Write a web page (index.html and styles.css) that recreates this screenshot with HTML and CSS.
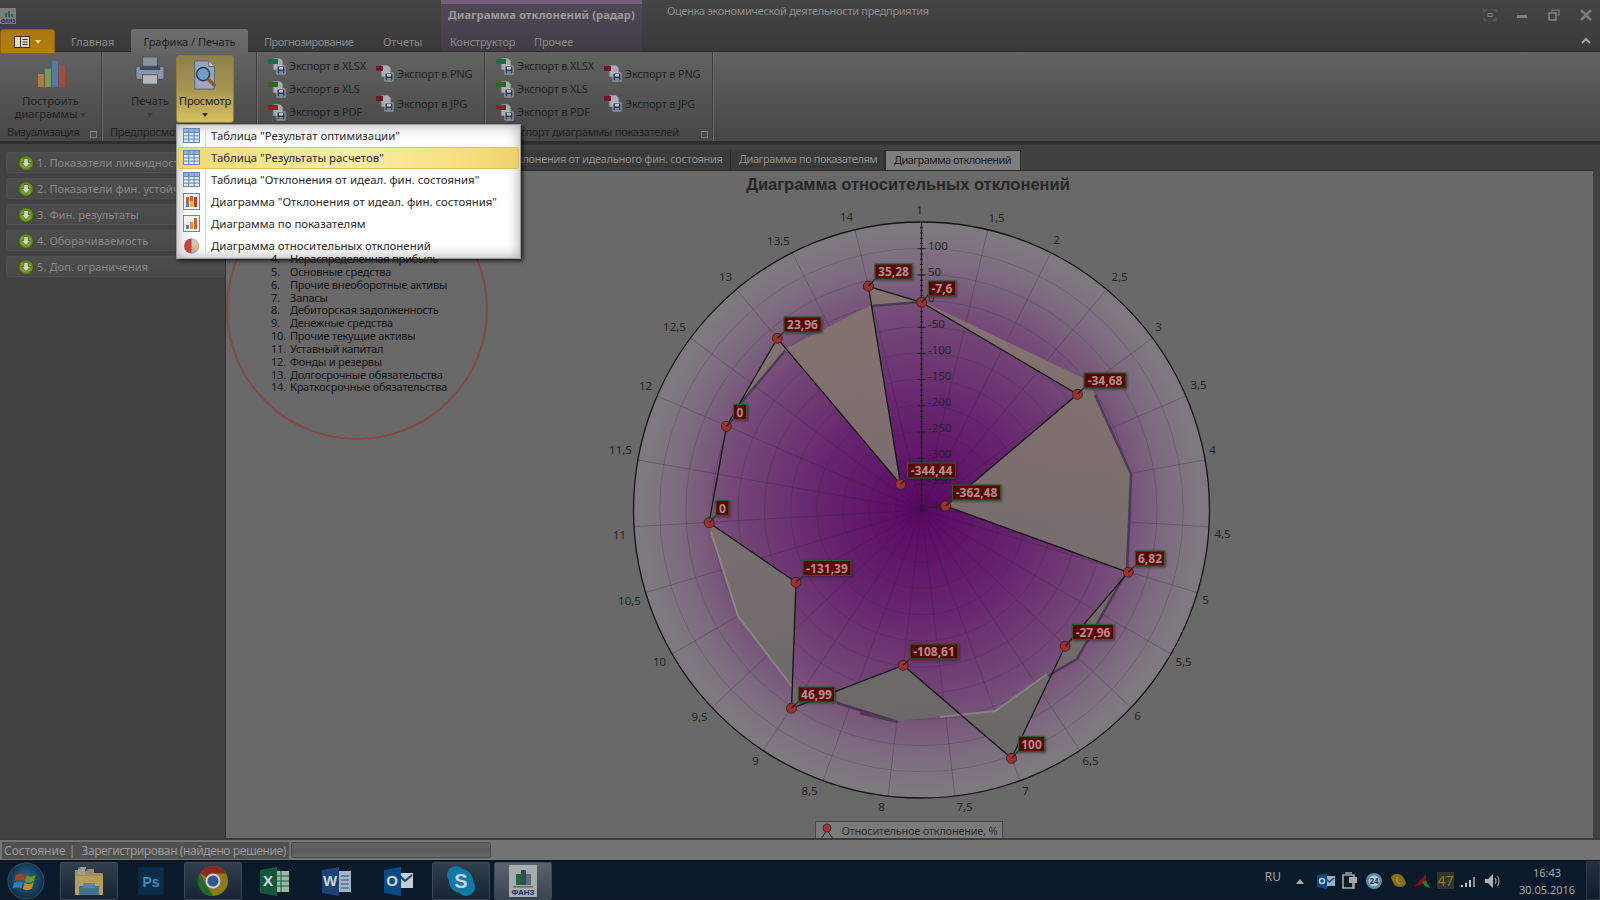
FILE: index.html
```html
<!DOCTYPE html>
<html lang="ru">
<head>
<meta charset="utf-8">
<title>Оценка экономической деятельности предприятия</title>
<link rel="stylesheet" href="styles.css">
</head>
<body>
<svg class="defs" width="0" height="0" aria-hidden="true">
  <defs>
    <symbol id="doc" viewBox="0 0 18 18">
      <path d="M5 1h7l3 3v9H5z" fill="#a9adb3" stroke="#5c6068" stroke-width=".8"/>
      <rect x="9" y="9" width="8" height="8" fill="#2c3b52" stroke="#c0c4c9" stroke-width=".8"/>
      <rect x="11" y="10" width="4" height="2.5" fill="#c0c4c9"/>
      <rect x="11" y="14" width="4" height="3" fill="#7b8796"/>
    </symbol>
    <symbol id="tbl" viewBox="0 0 18 18">
      <rect x=".5" y="1.5" width="16" height="14" fill="#dfe9f6" stroke="#5e88bb"/>
      <rect x="1" y="2" width="15" height="3.4" fill="#8db2dd"/>
      <path d="M.5 5.5h16M.5 8.8h16M.5 12.1h16M5.8 2v13M11.1 2v13" stroke="#5e88bb" fill="none"/>
    </symbol>
    <symbol id="arrow" viewBox="0 0 16 16">
      <circle cx="8" cy="8" r="7.5" fill="#5f7f26" stroke="#3d5418"/>
      <circle cx="8" cy="8" r="5.6" fill="#7fa432"/>
      <path d="M5.8 3.5h4.4v4h2.5L8 12.6 3.300 7.500h2.500z" fill="#cfd8bb" stroke="#3d5418" stroke-width=".7"/>
    </symbol>
  </defs>
</svg>

<header class="head">
  <div class="ctx-tint"></div>
  <div class="title-row">
    <svg class="app-logo" viewBox="0 0 16 16"><rect width="16" height="16" fill="#7c7c7c"/><path d="M5 9h2V5H5zM8 9h2V3H8zM11 9h2V6h-2z" fill="#2f5f3f"/><text x="8" y="15" class="logo-text">ФАНЗ</text></svg>
    <span class="ctx-title">Диаграмма отклонений (радар)</span>
    <span class="app-title">Оценка экономической деятельности предприятия</span>
    <div class="win-btns">
      <svg viewBox="0 0 14 12"><path d="M1 3V1h3M10 1h3v2M13 9v2h-3M4 11H1V9" fill="none" stroke="#5c5c5c" stroke-width="1.4"/><rect x="5" y="4.500" width="4" height="3" fill="none" stroke="#808080"/></svg>
      <svg viewBox="0 0 14 12"><rect x="2" y="6" width="10" height="3" fill="#808080"/></svg>
      <svg viewBox="0 0 14 12"><path d="M5 3V1h7v5h-2" fill="none" stroke="#808080" stroke-width="1.200"/><rect x="2" y="4" width="7" height="7" fill="none" stroke="#808080" stroke-width="1.600"/></svg>
      <svg viewBox="0 0 14 12"><path d="M2 1l10 10M12 1L2 11" stroke="#7c7c7c" stroke-width="2.600"/></svg>
    </div>
  </div>
  <nav class="tab-row">
    <div class="app-btn">
      <svg viewBox="0 0 16 12" class="app-btn-ico"><rect x=".5" y=".5" width="15" height="11" fill="#ddd8c8" stroke="#3f3420"/><path d="M6.500 1v10" stroke="#3f3420"/><path d="M8.500 3.500h5M8.500 6h5M8.500 8.500h5" stroke="#3f3420"/></svg>
      <span class="caret caret-light"></span>
    </div>
    <span class="rtab">Главная</span>
    <span class="rtab rtab-active">Графика / Печать</span>
    <span class="rtab rtab-long">Прогнозирование</span>
    <span class="rtab rtab-rep">Отчеты</span>
    <span class="rtab rtab-ctx">Конструктор</span>
    <span class="rtab rtab-ctx">Прочее</span>
    <svg class="collapse" viewBox="0 0 10 8"><path d="M1 6l4-4 4 4" fill="none" stroke="#a8a8a8" stroke-width="2"/></svg>
  </nav>
</header>

<section class="ribbon">
  <div class="group g1">
    <div class="group-body">
      <div class="big-btn">
        <svg class="big-ico" viewBox="0 0 30 30"><rect x="2" y="15" width="6" height="13" fill="#b07a3a"/><rect x="9" y="10" width="6" height="18" fill="#7a9a52"/><rect x="16" y="2" width="6" height="26" fill="#5578a6"/><rect x="23" y="7" width="6" height="21" fill="#a84a40"/></svg>
        <span class="big-label">Построить<br>диаграммы <i class="caret"></i></span>
      </div>
    </div>
    <div class="group-label">Визуализация<i class="launcher"></i></div>
  </div>
  <div class="group g2">
    <div class="group-body">
      <div class="big-btn print-btn">
        <svg class="big-ico" viewBox="0 0 32 32"><rect x="8" y="1" width="16" height="11" fill="#8d929a" stroke="#484c54"/><rect x="1" y="11" width="30" height="14" rx="2" fill="#8b96a8" stroke="#444a56"/><rect x="5" y="11" width="22" height="4" fill="#3f4b60"/><rect x="8" y="20" width="16" height="10" fill="#b5b8bd" stroke="#50545c"/></svg>
        <span class="big-label">Печать<br><i class="caret"></i></span>
      </div>
      <div class="big-btn view-btn">
        <svg class="big-ico" viewBox="0 0 30 32"><path d="M4 1h15l6 6v24H4z" fill="#9aa6bb" stroke="#55607a"/><path d="M19 1v6h6" fill="#c7ccd6" stroke="#55607a"/><circle cx="13" cy="15" r="7" fill="#6f9cc8" stroke="#2a3a55" stroke-width="1.600"/><path d="M18 20l8 8" stroke="#8a5a2a" stroke-width="3.400"/></svg>
        <span class="big-label">Просмотр<br><i class="caret caret-dark"></i></span>
      </div>
    </div>
    <div class="group-label">Предпросмотр</div>
  </div>
  <div class="group g3">
    <div class="group-body exports">
      <div class="ex-col">
        <div class="ex"><svg class="ex-ico"><use href="#doc"/><rect y="2" width="10" height="5" fill="#1f6a4a"/></svg>Экспорт в XLSX</div>
        <div class="ex"><svg class="ex-ico"><use href="#doc"/><rect y="2" width="10" height="5" fill="#2e6a1e"/></svg>Экспорт в XLS</div>
        <div class="ex"><svg class="ex-ico"><use href="#doc"/><rect y="2" width="10" height="5" fill="#8e2222"/></svg>Экспорт в PDF</div>
      </div>
      <div class="ex-col ex-col-2">
        <div class="ex"><svg class="ex-ico"><use href="#doc"/><rect y="2" width="7" height="5" fill="#6e1a24"/></svg>Экспорт в PNG</div>
        <div class="ex"><svg class="ex-ico"><use href="#doc"/><rect y="2" width="7" height="5" fill="#6e1a24"/></svg>Экспорт в JPG</div>
      </div>
    </div>
    <div class="group-label">Экспорт таблиц показателей</div>
  </div>
  <div class="group g4">
    <div class="group-body exports">
      <div class="ex-col">
        <div class="ex"><svg class="ex-ico"><use href="#doc"/><rect y="2" width="10" height="5" fill="#1f6a4a"/></svg>Экспорт в XLSX</div>
        <div class="ex"><svg class="ex-ico"><use href="#doc"/><rect y="2" width="10" height="5" fill="#2e6a1e"/></svg>Экспорт в XLS</div>
        <div class="ex"><svg class="ex-ico"><use href="#doc"/><rect y="2" width="10" height="5" fill="#8e2222"/></svg>Экспорт в PDF</div>
      </div>
      <div class="ex-col ex-col-2">
        <div class="ex"><svg class="ex-ico"><use href="#doc"/><rect y="2" width="7" height="5" fill="#6e1a24"/></svg>Экспорт в PNG</div>
        <div class="ex"><svg class="ex-ico"><use href="#doc"/><rect y="2" width="7" height="5" fill="#6e1a24"/></svg>Экспорт в JPG</div>
      </div>
    </div>
    <div class="group-label group-label-end">Экспорт диаграммы показателей<i class="launcher"></i></div>
  </div>
</section>

<main class="main">
  <aside class="side">
    <div class="side-item"><svg class="side-ico"><use href="#arrow"/></svg>1. Показатели ликвидности</div>
    <div class="side-item"><svg class="side-ico"><use href="#arrow"/></svg>2. Показатели фин. устойчивости</div>
    <div class="side-item"><svg class="side-ico"><use href="#arrow"/></svg>3. Фин. результаты</div>
    <div class="side-item"><svg class="side-ico"><use href="#arrow"/></svg>4. Оборачиваемость</div>
    <div class="side-item"><svg class="side-ico"><use href="#arrow"/></svg>5. Доп. ограничения</div>
  </aside>
  <div class="work">
    <div class="doc-tabs">
      <span class="dtab dtab-wide">Отклонения от идеального фин. состояния</span>
      <span class="dtab dtab-mid">Диаграмма по показателям</span>
      <span class="dtab dtab-active">Диаграмма отклонений</span>
    </div>
    <div class="panel">
      <ol class="legend-list">
        <li><b>4.</b>Нераспределенная прибыль</li>
        <li><b>5.</b>Основные средства</li>
        <li><b>6.</b>Прочие внеоборотные активы</li>
        <li><b>7.</b>Запасы</li>
        <li><b>8.</b>Дебиторская задолженность</li>
        <li><b>9.</b>Денежные средства</li>
        <li><b>10.</b>Прочие текущие активы</li>
        <li><b>11.</b>Уставный капитал</li>
        <li><b>12.</b>Фонды и резервы</li>
        <li><b>13.</b>Долгосрочные обязательства</li>
        <li><b>14.</b>Краткосрочные обязательства</li>
      </ol>
      <svg class="chart" viewBox="226 170 1367 670" width="1367" height="670">
        <defs>
          <radialGradient id="disc" gradientUnits="userSpaceOnUse" cx="921.5" cy="509" r="288">
            <stop offset="0" stop-color="#5c0666"/>
            <stop offset=".35" stop-color="#66246e"/>
            <stop offset=".68" stop-color="#754a78"/>
            <stop offset=".85" stop-color="#7d6b80"/>
            <stop offset=".94" stop-color="#7e767f"/>
            <stop offset="1" stop-color="#7e7a7f"/>
          </radialGradient>
          <linearGradient id="tan" x1="0" y1="0" x2="0" y2="1">
            <stop offset="0" stop-color="#86746f"/>
            <stop offset=".55" stop-color="#78706d"/>
            <stop offset="1" stop-color="#686866"/>
          </linearGradient>
        </defs>
        <circle class="red-ring" cx="357" cy="308" r="130"/>
        <text x="908" y="189" class="chart-title">Диаграмма относительных отклонений</text>
        <circle cx="921.5" cy="509" r="288" fill="url(#disc)"/>
        <g class="rings">
          <circle cx="921.5" cy="509" r="26.200"/><circle cx="921.5" cy="509" r="52.400"/><circle cx="921.5" cy="509" r="78.500"/><circle cx="921.5" cy="509" r="104.700"/><circle cx="921.5" cy="509" r="130.900"/><circle cx="921.5" cy="509" r="157.100"/><circle cx="921.5" cy="509" r="183.300"/><circle cx="921.5" cy="509" r="209.500"/><circle cx="921.5" cy="509" r="235.600"/><circle cx="921.5" cy="509" r="261.800"/>
        </g>
        <g class="spokes" transform="translate(921.5 509)">
          <path d="M0 0L66.400-280.200M0 0L129.300-257.400M0 0L185.100-220.600M0 0L231-172M0 0L264.400-114.100M0 0L283.600-50M0 0L287.500 16.700M0 0L275.900 82.600M0 0L249.400 144M0 0L209.500 197.600M0 0L158.300 240.600M0 0L98.500 270.600M0 0L33.400 286M0 0L-33.400 286M0 0L-98.500 270.600M0 0L-158.300 240.600M0 0L-209.500 197.600M0 0L-249.400 144M0 0L-275.900 82.600M0 0L-287.500 16.700M0 0L-283.600-50M0 0L-264.400-114.100M0 0L-231-172M0 0L-185.100-220.600M0 0L-129.300-257.400M0 0L-66.400-280.200"/>
        </g>
        <circle cx="921.500" cy="509" r="288" class="disc-edge"/>
        <g class="axis">
          <path d="M921.500 221V509" class="axis-line"/>
          <path d="M921.500 221V509" class="axis-minor"/>
          <path d="M921.500 247.200V509" class="axis-major"/>
          <text x="928" y="244">100</text><text x="928" y="270">50</text><text x="928" y="296">0</text><text x="928" y="322">-50</text><text x="928" y="348">-100</text><text x="928" y="374">-150</text><text x="928" y="400">-200</text><text x="928" y="426">-250</text><text x="928" y="452">-300</text><text x="928" y="478">-350</text><text x="928" y="504">-400</text>
        </g>
        <path class="tan" fill="url(#tan)" fill-rule="evenodd" d="M921.600 300L1085 378L1095 393L1131 473L1125.500 570L1076 657L1047 673L995.500 709L898 720L837 700L793 687L737 615L710 530L725 425L741 400L785 348L871 304Z M921.600 301.300L1077.400 393.300L945.700 505L1128.300 571.300L1065.100 645.300L1011.500 757.300L903.200 664.300L791.500 707.300L796 581.300L709.200 521.700L726.400 425.300L777.300 337.300L900.600 483.300L868.400 285.300Z"/>
        <path class="edge-dark" d="M1095 394L1131 473L1127 570L1077 658L1048 675"/>
        <path class="edge-dark" d="M741 402L785 350M871 305L921 301M860 712L898 721L837 702"/>
        <path class="edge-light" d="M711 531L738 615L793 687M1047 673L995.500 710L940 716"/>
        <path class="inner" d="M921.600 301.300L1077.400 393.300L945.700 505L1128.300 571.300L1065.100 645.300L1011.500 757.300L903.200 664.300L791.500 707.300L796 581.300L709.200 521.700L726.400 425.300L777.300 337.300L900.600 483.300L868.400 285.300Z"/>
        <g class="conn">
          <path d="M921.600 301.300L930 292M1077.400 393.300L1086 385M945.700 505L954 497M1128.300 571.300L1137 563M1065.100 645.300L1074 637M1011.500 757.300L1020 748M903.200 664.300L912 656M791.500 707.300L800 699M796 581.300L805 573M709.200 521.700L718 512M726.400 425.300L735 416M777.300 337.300L786 329M900.600 483.300L909 475M868.400 285.300L877 276"/>
        </g>
        <g class="points">
          <circle cx="921.600" cy="301.300" r="5"/><circle cx="1077.400" cy="393.300" r="5"/><circle cx="945.700" cy="505" r="5"/><circle cx="1128.300" cy="571.300" r="5"/><circle cx="1065.100" cy="645.300" r="5"/><circle cx="1011.500" cy="757.300" r="5"/><circle cx="903.200" cy="664.300" r="5"/><circle cx="791.500" cy="707.300" r="5"/><circle cx="796" cy="581.300" r="5"/><circle cx="709.200" cy="521.700" r="5"/><circle cx="726.400" cy="425.300" r="5"/><circle cx="777.300" cy="337.300" r="5"/><circle cx="900.600" cy="483.300" r="5"/><circle cx="868.400" cy="285.300" r="5"/>
        </g>
        <g class="pt-marks">
          <path d="M921.600 301.300l4-4M1077.400 393.300l4-4M945.700 505l4-4M1128.300 571.300l4-4M1065.100 645.300l4-4M1011.500 757.300l4-4M903.200 664.300l4-4M791.500 707.300l4-4M796 581.300l4-4M709.200 521.700l4-4M726.400 425.300l4-4M777.300 337.300l4-4M900.600 483.300l4-4M868.400 285.300l4-4"/>
        </g>
        <g class="tags">
          <rect x="928.500" y="280" width="27" height="15"/><rect x="875" y="263" width="37" height="15"/><rect x="784" y="316" width="37" height="15"/><rect x="733.500" y="403.500" width="13" height="15"/><rect x="1084" y="372" width="42" height="15"/><rect x="907.500" y="462" width="48" height="15"/><rect x="952.500" y="484" width="48" height="15"/><rect x="716" y="499.500" width="13" height="15"/><rect x="803" y="559.500" width="48" height="15"/><rect x="1135.500" y="550" width="29" height="15"/><rect x="1072.500" y="623.500" width="41" height="15"/><rect x="910" y="643" width="48" height="15"/><rect x="798.500" y="686" width="36" height="15"/><rect x="1018.500" y="735.500" width="26" height="15"/>
          <text x="942" y="292">-7,6</text><text x="893.500" y="275">35,28</text><text x="802.500" y="328">23,96</text><text x="740" y="415.500">0</text><text x="1105" y="384">-34,68</text><text x="931.500" y="474">-344,44</text><text x="976.500" y="496">-362,48</text><text x="722.500" y="511.500">0</text><text x="827" y="571.500">-131,39</text><text x="1150" y="562">6,82</text><text x="1093" y="635.500">-27,96</text><text x="934" y="655">-108,61</text><text x="816.500" y="698">46,99</text><text x="1031.500" y="747.500">100</text>
        </g>
        <g class="spoke-labels" transform="translate(921.5 509)">
          <text x="-2" y="-301">1</text><text x="75" y="-293">1,5</text><text x="135" y="-271">2</text><text x="198" y="-234">2,5</text><text x="237" y="-184">3</text><text x="277" y="-126">3,5</text><text x="291" y="-61">4</text><text x="301" y="23">4,5</text><text x="284" y="89">5</text><text x="262" y="151">5,5</text><text x="216" y="205">6</text><text x="169" y="250">6,5</text><text x="104" y="280">7</text><text x="43" y="296">7,5</text><text x="-40" y="296">8</text><text x="-112" y="280">8,5</text><text x="-166" y="250">9</text><text x="-222" y="206">9,5</text><text x="-262" y="151">10</text><text x="-292" y="90">10,5</text><text x="-302" y="24">11</text><text x="-301" y="-61">11,5</text><text x="-276" y="-125">12</text><text x="-247" y="-184">12,5</text><text x="-196" y="-234">13</text><text x="-143" y="-270">13,5</text><text x="-75" y="-294">14</text>
        </g>
        <g class="chart-legend">
          <rect x="815.500" y="820.500" width="187" height="22"/>
          <path d="M821 838L827 829L833 838" fill="none" stroke="#222"/>
          <circle cx="827" cy="827" r="4" fill="#a63434" stroke="#333"/>
          <text x="841.500" y="834">Относительное отклонение, %</text>
        </g>
      </svg>
    </div>
  </div>
</main>

<footer class="status">
  <div class="status-text">Состояние | <span class="status-reg">Зарегистрирован (найдено решение)</span></div>
  <div class="progress"></div>
</footer>

<div class="taskbar">
  <svg class="orb" viewBox="0 0 38 38">
    <defs><radialGradient id="orbg" cx=".5" cy=".45" r=".6"><stop offset="0" stop-color="#2a6d92"/><stop offset="1" stop-color="#0a2438"/></radialGradient></defs>
    <circle cx="19" cy="19" r="18" fill="url(#orbg)" stroke="#33536a"/>
    <path d="M9 13q5-3 9 0l-1.500 6q-4-2-9 0z" fill="#a83e22"/><path d="M19.500 13.500q4 2.500 9-.5l-1.500 6q-5 3-9 .5z" fill="#6f9a1e"/><path d="M7 20.500q5-2 9 0l-1.500 6q-4-2-9 0z" fill="#2a80b8"/><path d="M17.500 21q4 2.500 9-.5l-1.500 6q-5 3-9 .5z" fill="#c0921a"/>
  </svg>
  <div class="tb tb-on">
    <svg viewBox="0 0 34 34" class="tb-ico"><path d="M3 6h12l2 3h14v22H3z" fill="#a58f4e"/><rect x="6" y="3" width="8" height="8" fill="#9d9d90"/><rect x="6" y="3" width="2.500" height="2" fill="#2c8c3c"/><rect x="13" y="5" width="9" height="6" fill="#8d8d80"/><rect x="13" y="5" width="2.500" height="2" fill="#a83232"/><rect x="3" y="12" width="28" height="19" fill="#b59e5c"/><rect x="7" y="22" width="20" height="9" fill="#47708e"/><rect x="11" y="19" width="12" height="5" fill="#5d849e"/></svg>
  </div>
  <div class="tb">
    <svg viewBox="0 0 34 34" class="tb-ico"><rect x="4" y="3" width="26" height="28" fill="#0a2c48" stroke="#072034"/><text x="17" y="23" class="ps-text">Ps</text></svg>
  </div>
  <div class="tb tb-on">
    <svg viewBox="0 0 34 34" class="tb-ico"><circle cx="17" cy="17" r="15" fill="#8c7a1c"/><path d="M17 2a15 15 0 0 1 13 7.500H17a7.500 7.500 0 0 0-6.500 3.800L4 9A15 15 0 0 1 17 2z" fill="#8a2a1e"/><path d="M4 9l6.500 12 6.500 11A15 15 0 0 1 4 9z" fill="#27662e"/><circle cx="17" cy="17" r="7.500" fill="#ccd0d4"/><circle cx="17" cy="17" r="5.500" fill="#33588e"/></svg>
  </div>
  <div class="tb">
    <svg viewBox="0 0 34 34" class="tb-ico"><rect x="17" y="7" width="14" height="21" fill="#9ab9a5"/><path d="M17 12h14M17 17h14M17 22h14M23 7v21" stroke="#1f5a38"/><path d="M2 6l17-3v29L2 29z" fill="#15573a"/><text x="10" y="22" class="x-text">X</text></svg>
  </div>
  <div class="tb">
    <svg viewBox="0 0 34 34" class="tb-ico"><rect x="17" y="7" width="14" height="21" fill="#a6b5c6"/><path d="M21 12h8M21 16h8M21 20h8M21 24h8" stroke="#2a4a78"/><path d="M2 6l17-3v29L2 29z" fill="#1e4275"/><text x="10" y="22" class="x-text">W</text></svg>
  </div>
  <div class="tb">
    <svg viewBox="0 0 34 34" class="tb-ico"><rect x="16" y="9" width="15" height="15" fill="#c5cdd5"/><path d="M17 11l6 6 7-6" fill="none" stroke="#0c4478" stroke-width="2"/><path d="M2 6l17-3v29L2 29z" fill="#0a4a82"/><text x="10" y="22" class="x-text">O</text></svg>
  </div>
  <div class="tb tb-on">
    <svg viewBox="0 0 34 34" class="tb-ico"><circle cx="12" cy="11" r="9" fill="#0f7aa8"/><circle cx="22" cy="23" r="9" fill="#0f7aa8"/><circle cx="17" cy="17" r="12" fill="#0f7aa8"/><text x="17" y="24" class="s-text">S</text></svg>
  </div>
  <div class="tb tb-on tb-light">
    <svg viewBox="0 0 34 34" class="tb-ico"><rect x="3" y="1" width="28" height="32" fill="#a7acae"/><rect x="10" y="10" width="5" height="11" fill="#226638"/><rect x="15" y="6" width="5" height="15" fill="#2f4a58"/><rect x="20" y="10" width="5" height="11" fill="#5c6a74"/><rect x="7" y="22" width="20" height="1.500" fill="#666"/><text x="17" y="31" class="fanz-text">ФАНЗ</text></svg>
  </div>
  <div class="tray">
    <span class="lang">RU</span>
    <svg class="tray-ico tray-arrow" viewBox="0 0 10 8"><path d="M1 7l4-5 4 5z" fill="#a9adb1"/></svg>
    <svg class="tray-ico" viewBox="0 0 18 18"><rect x="7" y="4" width="11" height="10" fill="#9eb0c0"/><path d="M8 6l4.500 4L17 6" fill="none" stroke="#0a4a82" stroke-width="1.500"/><path d="M0 3l10-2v16L0 15z" fill="#0a4a82"/><circle cx="5" cy="9" r="2.500" fill="none" stroke="#c5cdd5" stroke-width="1.500"/></svg>
    <svg class="tray-ico" viewBox="0 0 18 18"><path d="M2 3h11v13H2z" fill="none" stroke="#a8a8a8" stroke-width="1.600"/><rect x="8" y="5" width="8" height="6" fill="#a8a8a8"/><path d="M12 11v6M4 1h7" stroke="#a8a8a8" stroke-width="1.600"/></svg>
    <svg class="tray-ico" viewBox="0 0 18 18"><circle cx="9" cy="9" r="8" fill="#5a8aa8"/><circle cx="9" cy="9" r="5.500" fill="#b2c4d0"/><text x="9" y="12" class="tray-24">24</text></svg>
    <svg class="tray-ico" viewBox="0 0 18 18"><path d="M2 5q3-4 7-3 5 0 8 9-1 4-6 4Q4 15 2 5z" fill="#8a6c14"/><path d="M8 5v5l3 2" stroke="#c2a548" fill="none"/></svg>
    <svg class="tray-ico" viewBox="0 0 18 18"><path d="M1 15L13 2v9z" fill="#8a1212"/><path d="M9 10l4-1 4 7-5-2z" fill="#1a8a2a"/></svg>
    <span class="tray-47">47</span>
    <svg class="tray-ico" viewBox="0 0 18 18"><path d="M1 13h2v2H1zM5 11h2v4H5zM9 8h2v7H9z" fill="#c4c4c4"/><path d="M13 5h2v10h-2z" fill="#888"/></svg>
    <svg class="tray-ico" viewBox="0 0 18 18"><path d="M1 7h3l5-5v14l-5-5H1z" fill="#b2b2b2"/><path d="M11 6q2 3 0 6M13.500 4q3 5 0 10" fill="none" stroke="#9a9a9a" stroke-width="1.200"/></svg>
    <div class="clock"><span>16:43</span><span>30.05.2016</span></div>
    <div class="show-desktop"></div>
  </div>
</div>

<div class="menu">
  <div class="m-item"><svg class="m-ico"><use href="#tbl"/></svg>Таблица "Результат оптимизации"</div>
  <div class="m-item m-hot"><svg class="m-ico"><use href="#tbl"/></svg>Таблица "Результаты расчетов"</div>
  <div class="m-item"><svg class="m-ico"><use href="#tbl"/></svg>Таблица "Отклонения от идеал. фин. состояния"</div>
  <div class="m-item"><svg class="m-ico" viewBox="0 0 18 18"><rect x=".5" y=".5" width="16" height="16" fill="#eef2f7" stroke="#6a86ad"/><rect x="3" y="4" width="3" height="10" fill="#d85c30"/><rect x="7" y="3" width="3" height="11" fill="#d85c30"/><rect x="11" y="4" width="3" height="10" fill="#c33"/><rect x="3" y="9" width="3" height="5" fill="#5580c0"/><rect x="7" y="8" width="3" height="6" fill="#f0b030"/></svg>Диаграмма "Отклонения от идеал. фин. состояния"</div>
  <div class="m-item"><svg class="m-ico" viewBox="0 0 18 18"><rect x=".5" y=".5" width="16" height="16" fill="#eef2f7" stroke="#6a86ad"/><rect x="3" y="10" width="3" height="4" fill="#5580c0"/><rect x="7" y="7" width="3" height="7" fill="#e89030"/><rect x="11" y="3" width="3" height="11" fill="#d85c30"/></svg>Диаграмма по показателям</div>
  <div class="m-item"><svg class="m-ico" viewBox="0 0 18 18"><circle cx="8.500" cy="9" r="7.500" fill="#c4463c"/><path d="M8.500 9V1.500a7.500 7.500 0 0 1 7.500 7.500z" fill="#c8c8c0"/><path d="M8.500 9h7.500a7.500 7.500 0 0 1-3 6z" fill="#e8b468"/><path d="M8.500 9l4.500 6a7.500 7.500 0 0 1-4.500 1.500z" fill="#9fb8d0"/></svg>Диаграмма относительных отклонений</div>
</div>
</body>
</html>
```
FILE: styles.css
```css
* { box-sizing: border-box; }
html, body { margin: 0; padding: 0; }
body {
  width: 1600px;
  height: 900px;
  overflow: hidden;
  display: flex;
  flex-direction: column;
  background: #404040;
  font-family: "Noto Sans", "DejaVu Sans", sans-serif;
  font-size: 11px;
  color: #222;
}
.defs { position: absolute; }

.head {
  position: relative;
  height: 52px;
  flex: none;
  background: linear-gradient(#454545, #393939);
  border-bottom: 1px solid #2c2c2c;
}
.ctx-tint {
  position: absolute;
  left: 441px;
  top: 0;
  width: 201px;
  height: 51px;
  background: linear-gradient(#4e4855 8%, #403c45 100%);
  border-top: 4px solid #735e80;
}
.title-row {
  position: relative;
  height: 29px;
  display: flex;
  align-items: flex-start;
}
.app-logo { width: 16px; height: 16px; margin-top: 8px; flex: none; }
.logo-text { font-size: 5px; text-anchor: middle; fill: #1c2f70; font-weight: 700; }
.ctx-title {
  margin-left: 432px;
  width: 219px;
  margin-top: 7px;
  font-weight: 700;
  font-size: 11.300px;
  color: #9a9a9a;
}
.app-title {
  margin-left: 0;
  margin-top: 3px;
  color: #8f8f8f;
  letter-spacing: -.3px;
}
.win-btns {
  margin-left: auto;
  margin-right: -2px;
  display: grid;
  grid-template-columns: repeat(4, 32px);
  justify-items: center;
  margin-top: 9px;
}
.win-btns svg { width: 14px; height: 12px; }

.tab-row {
  position: relative;
  height: 22px;
  display: grid;
  grid-template-columns: 55px 76px 117px 121px 72px 84px 60px 1fr;
  align-items: stretch;
}
.app-btn {
  background: linear-gradient(#a87810, #b4800c);
  border: 1px solid #8c6410;
  border-radius: 3px 3px 0 0;
  display: flex;
  align-items: center;
  justify-content: center;
  gap: 5px;
}
.app-btn-ico { width: 16px; height: 12px; }
.rtab {
  padding-left: 16px;
  line-height: 25px;
  color: #8b8b8b;
  white-space: nowrap;
}
.rtab-long { letter-spacing: -.5px; }
.rtab-active {
  background: linear-gradient(#6e6e6e, #646464);
  color: #202020;
  border-radius: 3px 3px 0 0;
  text-align: center;
  padding: 0;
}
.rtab-rep { padding-left: 14px; }
.rtab-ctx { padding-left: 9px; letter-spacing: -.1px; }
.collapse {
  position: absolute;
  right: 9px;
  top: 8px;
  width: 10px;
  height: 8px;
}
.caret {
  display: inline-block;
  width: 0;
  height: 0;
  border: 3px solid transparent;
  border-top: 4px solid #3a3a3a;
  border-bottom: 0;
  vertical-align: middle;
}
.caret-light { border-top-color: #e4d8b4; }
.caret-dark { border-top-color: #2a2a2a; }

.ribbon {
  height: 92px;
  flex: none;
  display: flex;
  background: linear-gradient(#626262, #464646);
  border-bottom: 3px solid #2e2e2e;
}
.group {
  display: flex;
  flex-direction: column;
  border-right: 1px solid #3d3d3d;
  box-shadow: 1px 0 0 #6b6b6b;
  margin-right: 1px;
}
.g1 { width: 102px; }
.g2 { width: 154px; }
.g3 { width: 227px; }
.g4 { width: 227px; }
.group-body { flex: 1; display: flex; min-height: 0; }
.group-label {
  height: 17px;
  position: relative;
  padding-left: 7px;
  line-height: 15px;
  color: #222;
  letter-spacing: -.25px;
  white-space: nowrap;
}
.launcher {
  position: absolute;
  right: 4px;
  bottom: 3px;
  width: 7px;
  height: 7px;
  border: 1px solid #7a7a7a;
  border-top-color: #8a8a8a;
  background: #4a4a4a;
}
.group-label-end { padding-left: 22px; }
.big-btn {
  display: flex;
  flex-direction: column;
  align-items: center;
  text-align: center;
  line-height: 13px;
  color: #202020;
}
.g1 .big-btn { width: 100%; padding-top: 7px; }
.g1 .big-label { margin-top: 5px; }
.big-ico { width: 30px; height: 30px; flex: none; }
.big-label { margin-top: 8px; }
.print-btn { width: 58px; margin-left: 18px; margin-right: -3px; padding-top: 4px; }
.view-btn {
  width: 58px;
  height: 68px;
  margin-top: 3px;
  padding-top: 4px;
  border: 1px solid #907c38;
  border-radius: 3px;
  background: linear-gradient(#8e7f48, #a79650 50%, #d6c060);
  letter-spacing: -.2px;
}
.view-btn .big-label { margin-top: 4px; }
.exports { padding-left: 10px; }
.ex-col {
  width: 112px;
  padding-top: 2px;
  display: flex;
  flex-direction: column;
}
.ex-col-2 { padding-top: 12px; gap: 12px; }
.ex {
  display: flex;
  align-items: center;
  gap: 3px;
  height: 23px;
  color: #222;
  letter-spacing: -.2px;
  white-space: nowrap;
}
.ex-col-2 .ex { height: 18px; }
.ex-ico { width: 18px; height: 18px; flex: none; }

.main { flex: 1; min-height: 0; display: flex; }
.side {
  width: 226px;
  flex: none;
  padding: 8px 0 0 6px;
  background: #424242;
  border-right: 1px solid #2f2f2f;
  display: flex;
  flex-direction: column;
  gap: 5px;
}
.side-item {
  height: 21px;
  display: flex;
  align-items: center;
  gap: 3px;
  padding-left: 11px;
  color: #8a8a8a;
  font-size: 11px;
  letter-spacing: .1px;
  white-space: nowrap;
  background: linear-gradient(#4d4d4d, #484848);
  border: 1px solid #505050;
  border-radius: 2px;
  overflow: hidden;
}
.side-ico { width: 16px; height: 16px; flex: none; }

.work { flex: 1; min-width: 0; display: flex; flex-direction: column; padding-right: 7px; padding-top: 5px; background: #414141; border-top: 1px solid #353535; }
.doc-tabs {
  height: 20px;
  flex: none;
  display: flex;
  justify-content: flex-start;
  padding-left: 268px;
  align-items: stretch;
}
.dtab {
  padding: 0 8px;
  line-height: 18px;
  color: #909090;
  background: #3a3a3a;
  white-space: nowrap;
  letter-spacing: -.45px;
  border-right: 1px solid #2c2c2c;
  overflow: hidden;
}
.dtab-wide { width: 237px; padding: 0 4px 0 10px; letter-spacing: -.3px; }
.dtab-mid { width: 154px; }
.dtab-active {
  width: 136px;
  color: #202020;
  background: #7e7e7e;
  border: 1px solid #2c2c2c;
  border-bottom: 0;
  letter-spacing: -.55px;
}
.panel {
  position: relative;
  flex: 1;
  min-height: 0;
  overflow: hidden;
  background: #696969;
  border-top: 1px solid #2c2c2c;
}
.chart { display: block; }
.legend-list {
  position: absolute;
  left: 45px;
  top: 82px;
  margin: 0;
  padding: 0;
  list-style: none;
  z-index: 1;
  color: #141414;
  line-height: 12.850px;
  letter-spacing: -.22px;
}
.legend-list li { display: flex; white-space: nowrap; }
.legend-list b { width: 19px; font-weight: 400; }

.red-ring { fill: none; stroke: #844848; stroke-width: 2; }
.chart-title { font-size: 16.500px; font-weight: 700; fill: #262626; text-anchor: middle; font-family: "Liberation Sans", sans-serif; }
.rings circle { fill: none; stroke: rgba(40, 30, 50, .22); }
.spokes path { fill: none; stroke: rgba(40, 30, 50, .28); }
.disc-edge { fill: none; stroke: #141414; stroke-width: 1.300; }
.axis-line { stroke: #222; stroke-width: 1.200; }
.axis-minor { stroke: #222; stroke-width: 3; stroke-dasharray: 1 4.240; fill: none; }
.axis-major { stroke: #222; stroke-width: 8; stroke-dasharray: 1 25.180; fill: none; }
.axis text { font-size: 11.500px; fill: #242424; dominant-baseline: central; }
.tan { opacity: .96; }
.edge-dark { fill: none; stroke: rgba(60, 45, 70, .7); stroke-width: 2.500; }
.edge-light { fill: none; stroke: rgba(170, 165, 165, .45); stroke-width: 2; }
.inner { fill: none; stroke: #141414; stroke-width: 1.300; stroke-linejoin: round; }
.conn path { stroke: #2d3a2a; stroke-width: 1.500; fill: none; }
.points circle { fill: #a03030; stroke: #332828; stroke-width: 1; }
.pt-marks path { stroke: #2a2020; stroke-width: 1.400; fill: none; }
.tags rect { fill: #5c0404; stroke: #2c5a2c; stroke-width: 1.200; filter: drop-shadow(1px 1px 1px rgba(0, 0, 0, .4)); }
.tags text { font-size: 12px; font-weight: 700; fill: #b09090; text-anchor: middle; }
.spoke-labels text { font-size: 11.500px; fill: #242424; text-anchor: middle; dominant-baseline: central; }
.chart-legend rect { fill: #7a7a7a; stroke: #444; }
.chart-legend text { font-size: 11px; fill: #2e2e2e; letter-spacing: -.25px; }

.status {
  height: 22px;
  flex: none;
  display: flex;
  align-items: center;
  gap: 2px;
  padding-left: 2px;
  background: #747474;
  border-top: 2px solid #3c3c3c;
}
.status-text {
  width: 287px;
  height: 17px;
  line-height: 17px;
  padding-left: 2px;
  background: #505050;
  color: #9a9a9a;
  font-size: 12px;
  white-space: nowrap;
  overflow: hidden;
}
.status-reg { margin-left: 3px; letter-spacing: -.4px; }
.progress {
  width: 200px;
  height: 16px;
  background: linear-gradient(#666, #5c5c5c 50%, #666);
  border: 1px solid #4a4a4a;
  border-radius: 2px;
}

.taskbar {
  height: 40px;
  flex: none;
  display: flex;
  align-items: center;
  gap: 4px;
  background: linear-gradient(#0a1a2c, #0c1a2a);
  border-top: 1px solid #111;
}
.orb { width: 38px; height: 38px; margin: 0 11px 0 7px; flex: none; }
.tb {
  width: 58px;
  height: 38px;
  display: flex;
  align-items: center;
  justify-content: center;
  border: 1px solid transparent;
  border-radius: 2px;
  flex: none;
}
.tb-on {
  border-color: #3c4a58;
  background: linear-gradient(rgba(120, 130, 140, .35), rgba(40, 55, 70, .35));
}
.tb-light { background: linear-gradient(#5a646e, #3a4450); }
.tb-ico { width: 34px; height: 34px; }
.ps-text { font-size: 14px; font-weight: 700; fill: #3d8cc0; text-anchor: middle; font-family: "Liberation Sans", sans-serif; }
.x-text { font-size: 15px; font-weight: 700; fill: #cfd6da; text-anchor: middle; font-family: "Liberation Sans", sans-serif; }
.s-text { font-size: 20px; font-weight: 700; fill: #c5d2d8; text-anchor: middle; font-family: "Liberation Sans", sans-serif; }
.fanz-text { font-size: 8px; font-weight: 700; fill: #10306c; text-anchor: middle; font-family: "Liberation Sans", sans-serif; }
.tray {
  margin-left: auto;
  display: flex;
  align-items: center;
  height: 100%;
  gap: 6px;
}
.lang { color: #a0a4a8; font-size: 12px; margin-top: -8px; margin-left: 2px; margin-right: 8px; }
.tray-ico { width: 18px; height: 18px; flex: none; }
.tray-arrow { width: 10px; height: 8px; margin-right: 6px; }
.tray-24 { font-size: 8px; text-anchor: middle; fill: #1c3c5a; font-weight: 700; }
.tray-47 { width: 17px; height: 17px; line-height: 17px; text-align: center; background: #333; color: #927716; font-size: 14px; }
.clock {
  display: flex;
  flex-direction: column;
  align-items: center;
  width: 62px;
  margin-left: 8px;
  margin-right: 2px;
  line-height: 17px;
  color: #a4a8ac;
  font-size: 11px;
}
.show-desktop {
  width: 14px;
  height: 100%;
  border: 1px solid #2c3a48;
  background: linear-gradient(#223040, #101e2c);
}

.menu {
  position: absolute;
  left: 176px;
  top: 124px;
  width: 345px;
  height: 135px;
  padding: 0 1px;
  background: #fff;
  border: 1px solid #9a9a9a;
  box-shadow: 2px 2px 4px rgba(0, 0, 0, .7), inset 0 0 14px rgba(90, 90, 90, .55);
}
.menu::before {
  content: "";
  position: absolute;
  left: 28px;
  top: 0;
  bottom: 0;
  width: 1px;
  background: #d8d8d8;
}
.m-item {
  position: relative;
  height: 22px;
  display: flex;
  align-items: center;
  gap: 10px;
  padding: 0 0 2px 5px;
  color: #2a2a2a;
  font-size: 11.400px;
  white-space: nowrap;
}
.m-hot {
  background: linear-gradient(90deg, #f2d975, #f7e080 15%, #fbeda8 50%, #f5dc78 90%, #eccf6a);
  border: 1px solid #e2c060;
  border-radius: 2px;
  padding-left: 4px;
}
.m-ico { width: 18px; height: 18px; flex: none; margin-top: 2px; }
```
